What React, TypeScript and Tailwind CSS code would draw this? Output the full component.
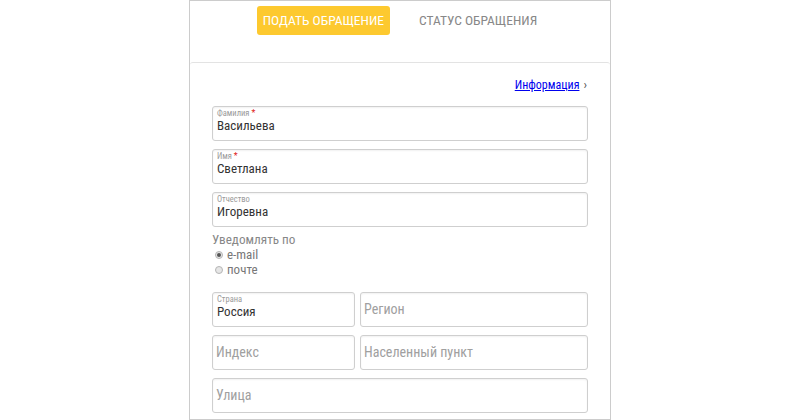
import React from "react";

function Field({ label, value, required, className = "" }: { label?: string; value?: string; required?: boolean; className?: string }) {
  return (
    <div className={"h-[35px] rounded-[3px] border border-[#cfcfcf] bg-white px-[4px] shadow-[inset_0_1px_2px_rgba(0,0,0,0.06)] " + className}>
      {value ? (
        <div className="flex flex-col pt-[2px]">
          <div className="flex items-start h-[9px] text-[8.5px] leading-[9px] text-[#9a9a9a]">
            {label}
            {required && <span className="ml-[2px] text-[#e02020] text-[9px] leading-[9px]">*</span>}
          </div>
          <div className="text-[13px] leading-[15px] text-[#333]">{value}</div>
        </div>
      ) : (
        <div className="-ml-[1px] flex h-full items-center text-[14px] text-[#a0a0a0]">{label}</div>
      )}
    </div>
  );
}

function Radio({ checked, label }: { checked?: boolean; label: string }) {
  return (
    <div className="flex items-center gap-[4px] pl-[3px] h-[15px]">
      <span className="flex h-[8px] w-[8px] items-center justify-center rounded-full border border-[#b5b5b5] bg-[#e6e6e6]">
        {checked && <span className="h-[4px] w-[4px] rounded-full bg-[#555]" />}
      </span>
      <span className="text-[13px] leading-[15px] text-[#777]">{label}</span>
    </div>
  );
}

export default function App() {
  return (
    <div className="h-[420px] w-[800px] bg-white font-['Roboto_Condensed',Roboto,sans-serif]">
      <div className="mx-auto h-[420px] w-[422px] border-x border-t border-b border-[#cccccc] flex flex-col">
        <div className="h-[61px] flex justify-center items-start pt-[5px] gap-[23px]">
          <div className="h-[29px] rounded-[3px] bg-[#fdc92f] px-[6px] flex items-center text-[13.5px] text-white">
            ПОДАТЬ ОБРАЩЕНИЕ
          </div>
          <div className="h-[29px] px-[6px] flex items-center text-[13.5px] text-[#888]">
            СТАТУС ОБРАЩЕНИЯ
          </div>
        </div>
        <div className="flex-1 rounded-t-[3px] border-t border-[#e3e3e3] px-[22px]">
          <div className="flex justify-end items-center h-[43px] pr-[1px]">
            <a className="text-[12px] text-[#0000ee] underline">Информация</a>
            <span className="ml-[4px] text-[13px] text-[#555]">›</span>
          </div>
          <div className="flex flex-col gap-[8px]">
            <Field label="Фамилия" value="Васильева" required />
            <Field label="Имя" value="Светлана" required />
            <Field label="Отчество" value="Игоревна" />
          </div>
          <div className="mt-[5px] text-[13.2px] text-[#888] leading-[15px]">Уведомлять по</div>
          <Radio checked label="e-mail" />
          <Radio label="почте" />
          <div className="mt-[15px] flex flex-col gap-[8px]">
            <div className="flex gap-[5px]">
              <Field label="Страна" value="Россия" className="w-[143px]" />
              <Field label="Регион" className="flex-1" />
            </div>
            <div className="flex gap-[5px]">
              <Field label="Индекс" className="w-[143px]" />
              <Field label="Населенный пункт" className="flex-1" />
            </div>
            <Field label="Улица" />
          </div>
        </div>
      </div>
    </div>
  );
}
